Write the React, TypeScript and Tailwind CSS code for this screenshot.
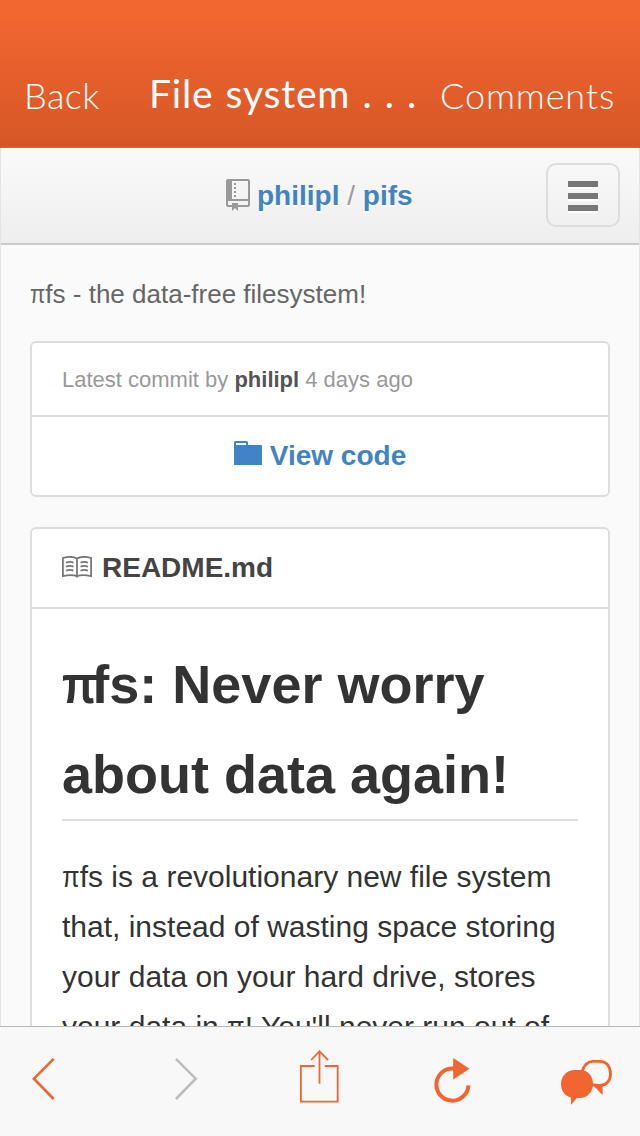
import React from "react";

function RepoIcon() {
  return (
    <svg className="mt-[-2px]" width="24" height="32" viewBox="0 0 24 32" fill="#999">
      <path fillRule="evenodd" d="M2 0H22Q24 0 24 2V26Q24 28 22 28H12V32L9 29L6 32V28H2Q0 28 0 26V2Q0 0 2 0ZM6 2V20H22V2ZM2 22V26H6V24H12V26H22V22Z" />
      <path d="M8 4h2v2H8zM8 8h2v2H8zM8 12h2v2H8zM8 16h2v2H8z" />
    </svg>
  );
}

function FolderIcon() {
  return (
    <svg className="mb-[5px]" width="28" height="24" viewBox="0 0 28 24" fill="#4183c4">
      <path fillRule="evenodd" d="M1.5 0H12.5Q14 0 14 1.5V4H27Q28 4 28 5V24H0V1.5Q0 0 1.5 0ZM2 2V4H12V2Z" />
    </svg>
  );
}

function BookIcon() {
  return (
    <svg className="mb-[2px]" width="30" height="22" viewBox="0 0 30 22" fill="none" stroke="#777">
      <path strokeWidth="1.8" d="M15 2.6C12 .7 6 .6 .9 2V20.2C6 19 12 19 15 20.2C18 19 24 19 29.1 20.2V2C24 .6 18 .7 15 2.6V21.5" />
      <path strokeWidth="1.8" d="M4 6.6Q8 5 11.5 6.6M4 10.6Q8 9.2 11.5 10.6M4 14.6Q8 13.2 11.5 14.6M18.5 6.6Q22 5 26 6.6M18.5 10.6Q22 9.2 26 10.6M18.5 14.6Q22 13.2 26 14.6" />
    </svg>
  );
}

function Pi() {
  return <span className="mr-[-0.1em] inline-block origin-left scale-x-[0.85]">π</span>;
}

function Toolbar() {
  return (
    <footer className="flex h-[110px] shrink-0 items-start border-t border-[#b8b8b8] bg-[#f8f8f8] pt-5 pl-8 text-[#f26531]">
      <svg className="mt-[11px]" width="24" height="42" viewBox="0 0 24 42" fill="none" stroke="currentColor" strokeWidth="2.6">
        <path d="M21.7 .9L1.9 20.7L21.7 41" />
      </svg>
      <svg className="mt-[11px] ml-[119px]" width="24" height="42" viewBox="0 0 24 42" fill="none" stroke="#bdbdbc" strokeWidth="2.6">
        <path d="M.9 .9L20.7 20.7L.9 41" />
      </svg>
      <svg className="ml-[100px]" width="40" height="56" viewBox="0 0 40 56" fill="none" stroke="currentColor" strokeWidth="1.8">
        <path d="M15.7 19H1.9V54.7H38.7V19H25.7M20.5 36.8V4M12.2 13L20.5 4.2L29 13" />
      </svg>
      <svg className="mt-[10px] ml-[95px]" width="38" height="48" viewBox="0 0 38 48">
        <path fill="none" stroke="currentColor" strokeWidth="4" d="M20 11.7A16 16 0 1 0 34.4 28.3" />
        <path fill="currentColor" d="M19.2 1L35.5 11.7L19.2 22.4Z" />
      </svg>
      <svg className="mt-3 ml-[88px]" width="53" height="47" viewBox="0 0 53 47">
        <path fill="none" stroke="currentColor" strokeWidth="2.8" d="M22 13C24 6 28 2.4 33 2.4H40C46.5 2.4 50.5 7.5 50.5 15C50.5 21.5 46.5 26 41 26.2V31.5L35.7 26H32" />
        <path fill="currentColor" d="M36 25H42.4V36L34 27Z" />
        <path fill="currentColor" d="M15 11H20C28 11 33 17 33 25C33 33 27 39 20 39H16.8L11 46V38.5C5 37 1 32 1 25C1 17 7 11 15 11Z" />
      </svg>
    </footer>
  );
}

export default function App() {
  return (
    <div className="flex h-[1136px] w-[640px] flex-col overflow-hidden bg-[#fafafa] font-['Liberation_Sans',sans-serif]">
      <header className="flex h-[148px] shrink-0 items-start border-b border-[#8e8582] bg-linear-to-b from-[#f26630] from-10% to-[#d65726] pt-[71px] pl-6 font-['Lato',sans-serif] text-[36px] leading-[48px] whitespace-nowrap text-white">
        <span className="w-[125px] font-light tracking-[0.5px]">Back</span>
        <h1 className="mt-[-2px] w-[291px] text-[39px] font-normal tracking-[0.8px] [word-spacing:1.5px]">File system . . .</h1>
        <span className="font-light tracking-[0.9px]">Comments</span>
      </header>
      <main className="min-h-0 flex-1 overflow-hidden border-x border-[#e4e4e4]">
        <nav className="flex h-[97px] items-center border-b-2 border-[#cacaca] bg-linear-to-b from-[#fafafa] to-[#eee] pr-[19px] pl-[225px]">
          <RepoIcon />
          <span className="ml-[7px] flex-1 text-[28px] leading-8 whitespace-pre text-[#999] [text-shadow:0_2px_0_#fff]">
            <b className="text-[#4183c4]">philipl</b> / <b className="text-[#4183c4]">pifs</b>
          </span>
          <button className="mb-[2px] flex h-16 w-[74px] flex-col items-center justify-center gap-1.5 rounded-[10px] border-2 border-[#ddd] pt-[2px]">
            <span className="h-1.5 w-[30px] bg-[#777] shadow-[0_2px_0_#fff]" />
            <span className="h-1.5 w-[30px] bg-[#777] shadow-[0_2px_0_#fff]" />
            <span className="h-1.5 w-[30px] bg-[#777] shadow-[0_2px_0_#fff]" />
          </button>
        </nav>
        <div className="px-[29px]">
          <p className="h-24 pt-[31px] text-[26px] leading-9 whitespace-nowrap text-[#666]">
            <Pi />fs - the data-free filesystem!
          </p>
          <section className="h-[156px] rounded-md border-2 border-[#ddd] bg-white">
            <div className="flex h-[74px] items-center border-b-2 border-[#ddd] px-[30px] text-[22px] whitespace-pre text-[#999]">
              <span>Latest commit by <b className="text-[#555]">philipl</b> 4 days ago</span>
            </div>
            <div className="flex h-[78px] items-center justify-center gap-2 pb-px text-[28px] font-bold text-[#4183c4]">
              <FolderIcon />
              <span>View code</span>
            </div>
          </section>
          <article className="mt-[30px] h-[700px] rounded-md border-2 border-[#ddd] bg-white">
            <div className="flex h-20 items-center gap-[10px] border-b-2 border-[#ddd] px-[30px] text-[28px] font-bold text-[#444]">
              <BookIcon />
              <span>README.md</span>
            </div>
            <div className="px-[30px] pt-[30px] whitespace-nowrap text-[#333]">
              <h2 className="h-[182px] border-b-2 border-[#ddd] text-[54px] leading-[90px] font-bold">
                <span className="mr-[-12px] inline-block origin-left scale-x-[0.82]">π</span>fs: Never worry<br />about data again!
              </h2>
              <p className="pt-[31px] text-[30px] leading-[50px]">
                <Pi />fs is a revolutionary new file system<br />
                that, instead of wasting space storing<br />
                your data on your hard drive, stores<br />
                your data in <Pi />! You'll never run out of
              </p>
            </div>
          </article>
        </div>
      </main>
      <Toolbar />
    </div>
  );
}
